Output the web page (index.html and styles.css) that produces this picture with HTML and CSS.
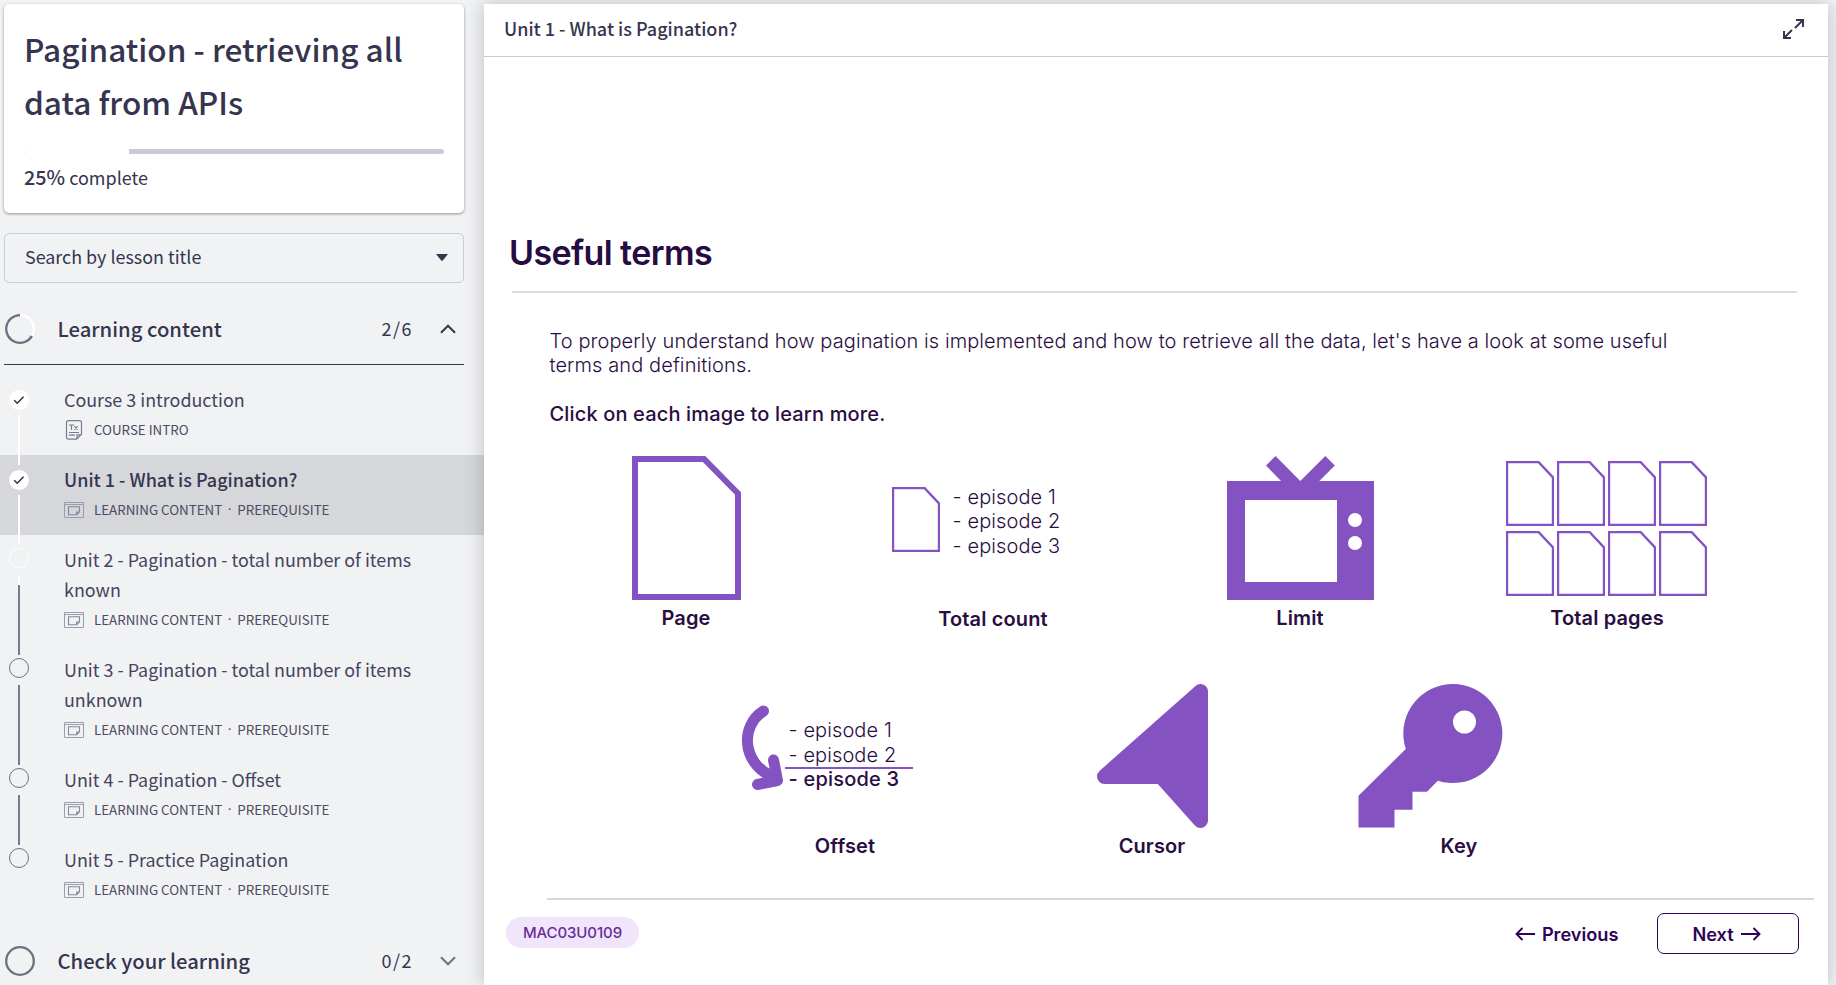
FILE: index.html
```html
<!DOCTYPE html>
<html lang="en">
<head>
<meta charset="utf-8">
<title>Pagination - retrieving all data from APIs</title>
<link rel="stylesheet" href="styles.css">
</head>
<body>
<svg class="defs" width="0" height="0">
  <symbol id="window" viewBox="0 0 20 16"><path d="M.5.5h19v15H.5zM.5 2.500h19" fill="none" stroke="#9c9cad"/><path d="M4.500 4.800h11v5l-2.800 2.900h-8.200zM15.500 10h-2.800v2.600" fill="none" stroke="#85859a" stroke-width="1.100"/></symbol>
  <symbol id="check" viewBox="0 0 20 20"><circle cx="10" cy="10" r="10" fill="#fff"/><path d="M5.2 10.3l3 3 6.4-6.6" fill="none" stroke="#33333d" stroke-width="1.5"/></symbol>
  <symbol id="ring" viewBox="0 0 20 20"><circle cx="10" cy="10" r="9.5" fill="none" stroke="currentColor"/></symbol>
  <symbol id="sheet" viewBox="0 0 48 65"><path d="M1 1h31.500l14.500 15.500v47.500h-46z" fill="none" stroke="#8453c1" stroke-width="2.400"/></symbol>
</svg>
<div class="app">
  <aside class="sidebar">
    <section class="card">
      <h1>Pagination - retrieving all<br>data from APIs</h1>
      <div class="bar"><div class="bar-done" style="width:25%"></div></div>
      <p class="percent"><b>25%</b> complete</p>
    </section>
    <div class="search"><span>Search by lesson title</span><svg width="12" height="7" viewBox="0 0 12 7"><path d="M0 0h12l-5 6.200q-1 1.200-2 0z" fill="#35354f"/></svg></div>
    <div class="section open">
      <svg class="big-ring" width="30" height="30" viewBox="0 0 30 30" fill="none" stroke-width="2.300"><path d="M15 1.200A13.800 13.800 0 1 0 26.950 21.900" stroke="#6f6f83"/><path d="M15 1.200A13.800 13.800 0 0 1 26.950 21.900" stroke="#fff"/></svg>
      <h2>Learning content</h2><span class="count">2/6</span>
      <svg width="16" height="10" viewBox="0 0 16 10"><path d="M1 8.700l7-7 7 7" fill="none" stroke="#35354f" stroke-width="2"/></svg>
    </div>
    <ul class="lessons">
      <li><div class="rail checked"><svg width="20" height="20"><use href="#check"/></svg><i class="pale"></i></div>
        <div class="lesson"><h3>Course 3 introduction</h3><p class="meta"><svg class="doc" width="20" height="20" viewBox="0 0 20 20" fill="none" stroke="#7b7b90" stroke-width="1.200"><path d="M4.500.7h11q2 0 2 2v11.500l-5 5h-8q-2 0-2-2V2.700q0-2 2-2zM17.500 14.800h-4.500v4.500M5 12.500h10M5 15.200h6M5 5h5M7.500 5v5M10.500 6l3 4M13.500 6l-3 4"/></svg><span>COURSE INTRO</span></p></div></li>
      <li class="active"><div class="rail checked"><svg width="20" height="20"><use href="#check"/></svg><i class="pale"></i></div>
        <div class="lesson"><h3>Unit 1 - What is Pagination?</h3><p class="meta"><svg width="20" height="16"><use href="#window"/></svg><span>LEARNING CONTENT</span><span class="dot">·</span><span>PREREQUISITE</span></p></div></li>
      <li><div class="rail current"><svg width="20" height="20"><use href="#ring"/></svg><i class="mixed"></i></div>
        <div class="lesson"><h3>Unit 2 - Pagination - total number of items<br>known</h3><p class="meta"><svg width="20" height="16"><use href="#window"/></svg><span>LEARNING CONTENT</span><span class="dot">·</span><span>PREREQUISITE</span></p></div></li>
      <li><div class="rail"><svg width="20" height="20"><use href="#ring"/></svg><i></i></div>
        <div class="lesson"><h3>Unit 3 - Pagination - total number of items<br>unknown</h3><p class="meta"><svg width="20" height="16"><use href="#window"/></svg><span>LEARNING CONTENT</span><span class="dot">·</span><span>PREREQUISITE</span></p></div></li>
      <li><div class="rail"><svg width="20" height="20"><use href="#ring"/></svg><i></i></div>
        <div class="lesson"><h3>Unit 4 - Pagination - Offset</h3><p class="meta"><svg width="20" height="16"><use href="#window"/></svg><span>LEARNING CONTENT</span><span class="dot">·</span><span>PREREQUISITE</span></p></div></li>
      <li><div class="rail"><svg width="20" height="20"><use href="#ring"/></svg></div>
        <div class="lesson"><h3>Unit 5 - Practice Pagination</h3><p class="meta"><svg width="20" height="16"><use href="#window"/></svg><span>LEARNING CONTENT</span><span class="dot">·</span><span>PREREQUISITE</span></p></div></li>
    </ul>
    <div class="section">
      <svg class="big-ring" width="30" height="30" viewBox="0 0 30 30"><circle cx="15" cy="15" r="13.800" fill="none" stroke="#6f6f83" stroke-width="2.300"/></svg>
      <h2>Check your learning</h2><span class="count">0/2</span>
      <svg width="16" height="10" viewBox="0 0 16 10"><path d="M1 1.300l7 7 7-7" fill="none" stroke="#6f6f83" stroke-width="2"/></svg>
    </div>
  </aside>
  <main class="panel">
    <header class="topbar"><span>Unit 1 - What is Pagination?</span>
      <svg width="21" height="20" viewBox="0 0 21 20" fill="none" stroke="#35354f" stroke-width="2"><path d="M13 1h7v7M20 1l-8 8M8 19H1v-7M1 19l8-8"/></svg>
    </header>
    <article class="slide">
      <h2 class="slide-title"><span>Useful terms</span></h2>
      <div class="slide-body">
        <p class="intro">To properly understand how pagination is implemented and how to retrieve all the data, let's have a look at some useful<br>terms and definitions.</p>
        <p class="hint">Click on each image to learn more.</p>
        <div class="terms">
          <figure><svg class="page" width="109" height="144" viewBox="0 0 109 144"><path d="M3 3h69l34 34.500v103.500h-103z" fill="none" stroke="#8453c1" stroke-width="6"/></svg><figcaption>Page</figcaption></figure>
          <figure><div class="art episodes"><svg width="48" height="65"><use href="#sheet"/></svg><div class="eps"><span>- episode 1</span><span>- episode 2</span><span>- episode 3</span></div></div><figcaption class="lower">Total count</figcaption></figure>
          <figure><svg width="147" height="144" viewBox="1227 456 147 144"><path fill-rule="evenodd" fill="#8453c1" d="M1227 481h54l-15-15.500 9.500-9.500 24.800 25 25-25 9.500 9.500-15.500 15.500h54.700v119h-147zM1245 500v82h92v-82zM1348 520a7 7 0 1 0 14 0a7 7 0 1 0-14 0M1348 543a7 7 0 1 0 14 0a7 7 0 1 0-14 0"/></svg><figcaption>Limit</figcaption></figure>
          <figure><div class="art sheets"><svg><use href="#sheet"/></svg><svg><use href="#sheet"/></svg><svg><use href="#sheet"/></svg><svg><use href="#sheet"/></svg><svg><use href="#sheet"/></svg><svg><use href="#sheet"/></svg><svg><use href="#sheet"/></svg><svg><use href="#sheet"/></svg></div><figcaption>Total pages</figcaption></figure>
        </div>
        <div class="terms second">
          <figure><div class="art offset"><svg width="43" height="89" viewBox="741 704 43 89" fill="none" stroke="#8453c1" stroke-width="11" stroke-linecap="round" stroke-linejoin="round"><path d="M763.500 711C740 726 742 762 771 776M773.500 760l4 20.500-20 4"/><path d="M771 770l6 10-10-2z" fill="#8453c1" stroke-width="4"/></svg><div class="eps"><span>- episode 1</span><span class="ruled">- episode 2</span><span class="strong">- episode 3</span></div></div><figcaption>Offset</figcaption></figure>
          <figure><svg class="cursor" width="111" height="144" viewBox="1098 683 111 144"><path d="M1105.500 775.500L1201.500 690.500V819.500L1162.200 775.500z" fill="#8453c1" stroke="#8453c1" stroke-width="15" stroke-linejoin="round"/></svg><figcaption>Cursor</figcaption></figure>
          <figure class="key"><svg width="145" height="144" viewBox="1358 683.500 145 144"><path fill-rule="evenodd" fill="#8453c1" d="M1405.800 748.500A49.500 49.500 0 1 1 1437.800 780.200L1427 791.200H1412.500V809.200H1394.500V827H1358.500V795.200zM1453 721.500a11.500 11.500 0 1 0 23 0a11.500 11.500 0 1 0-23 0"/></svg><figcaption>Key</figcaption></figure>
        </div>
      </div>
      <footer class="slide-foot">
        <span class="pill">MAC03U0109</span>
        <div class="nav">
          <span class="prev"><svg width="20" height="14" viewBox="0 0 20 14"><path d="M20 7H1.500M7.500 1l-6 6 6 6" fill="none" stroke="#2e0359" stroke-width="1.900"/></svg><b>Previous</b></span>
          <span class="next"><b>Next</b><svg width="20" height="14" viewBox="0 0 20 14"><path d="M0 7h18.500M12.500 1l6 6-6 6" fill="none" stroke="#2e0359" stroke-width="1.900"/></svg></span>
        </div>
      </footer>
    </article>
  </main>
</div>
</body>
</html>
```
FILE: styles.css
```css
* { box-sizing: border-box; }
body { margin: 0; background: #f1f2f4; color: #35354f; font-family: "Noto Sans CJK SC", sans-serif; overflow: hidden; }
h1, h2, h3, p, ul, figure { margin: 0; padding: 0; }
svg { display: block; flex: none; }
.defs { position: absolute; }
.app { display: flex; height: 985px; padding-top: 4px; overflow: hidden; }
.sidebar { width: 484px; flex: none; }
.card { margin-left: 4px; width: 460px; height: 209px; padding: 18px 21px 0 20px; background: #fff; border-radius: 5px; box-shadow: 0 1px 3px rgba(0,0,0,.4); }
h1 { font-size: 31.550px; line-height: 53px; font-weight: 500; white-space: nowrap; }
.bar { width: 420px; height: 5px; margin: 21px 0 0; border-radius: 3px; background: #cacbd7; overflow: hidden; }
.bar-done { height: 5px; background: #fff; }
.percent { font-size: 18px; line-height: 30px; margin-top: 8px; }
.percent b { font-weight: 500; font-size: 19.800px; }
.search { display: flex; align-items: center; justify-content: space-between; margin: 20px 0 0 4px; width: 460px; height: 50px; padding: 0 15px 2px 20px; border: 1px solid #cacbd7; border-radius: 5px; font-size: 17.900px; }
.search span { padding-bottom: 2px; }
.section { display: flex; align-items: center; height: 70px; width: 460px; margin: 11px 0 0 4px; padding: 0 8px 0 1px; }
.section h2 { margin-left: 22.500px; font-size: 20.250px; line-height: 30px; font-weight: 500; flex: 1; }
.count { font-size: 18px; letter-spacing: 1.500px; margin-right: 27px; padding-bottom: 2px; }
.section.open { height: 71px; border-bottom: 1px solid #35354f; }
.lessons { list-style: none; padding-top: 10px; }
.lessons li { display: flex; padding: 10px 0 10px 9px; }
.lessons .active { background: #d6d7db; }
.rail { display: flex; flex-direction: column; align-items: center; width: 20px; padding-top: 3px; color: #6f6f83; }
.rail.checked { padding-top: 5px; }
.rail.current { color: #fff; }
.rail i { width: 2px; flex: 1; margin: 7px 0 -20px; background: #77798e; }
.rail.checked i { margin: 5px 0 -20px; }
.rail .pale { background: #fff; z-index: 1; }
.rail .mixed { background: linear-gradient(#fff 10px, #77798e 10px); }
.lesson { margin: -1px 0 1px 35px; }
.lesson h3 { font-size: 17.900px; line-height: 30px; font-weight: 400; white-space: nowrap; color: #44445d; }
.lesson .meta { color: #4b4b62; }
.active .lesson h3 { font-weight: 500; font-size: 18px; color: #35354f; }
.meta { display: flex; align-items: center; height: 30px; font-size: 13.350px; }
.meta svg { margin-top: 1px; }
.meta svg + span { margin-left: 10px; }
.dot { width: 15px; text-align: center; font-family: Inter, sans-serif; }
.panel { width: 1344px; flex: none; background: #fff; box-shadow: 0 0 18px rgba(0,0,0,.22); z-index: 2; }
.topbar { display: flex; align-items: center; justify-content: space-between; height: 53px; padding: 0 24px 3px 20px; border-bottom: 1px solid #cacbd7; font-size: 18px; font-weight: 500; }
.topbar span { padding-bottom: 2px; }
.slide { font-family: Inter, sans-serif; color: #2a0e42; padding-top: 175px; }
.slide-title { margin: 0 31px 0 28px; height: 61px; font-size: 34px; line-height: 41px; font-weight: 600; color: #270b43; border-bottom: 2px solid #dfdadd; letter-spacing: -.6px; }
.slide-title span { margin-left: -3px; }
.slide-body { padding: 36px 0 0 65.500px; height: 605px; }
.intro { font-size: 20px; line-height: 24px; font-weight: 300; white-space: nowrap; letter-spacing: .095px; }
.hint { font-size: 20px; line-height: 24px; margin-top: 25px; font-weight: 500; letter-spacing: .15px; }
.terms { display: grid; grid-template-columns: repeat(4, 307px); margin: 30px 0 0 -17px; height: 228px; }
.terms.second { margin: 0 0 0 142px; grid-template-columns: repeat(3, 307px); }
figure { display: flex; flex-direction: column; align-items: center; }
figcaption { font-size: 20px; line-height: 24px; margin-top: 6px; font-weight: 600; letter-spacing: .12px; }
figcaption.lower { margin-top: 7px; }
.art { height: 144px; }
.cursor { margin-left: 1px; }
.key svg { margin-right: 58px; }
.episodes { display: flex; padding-top: 31px; margin-right: 34px; }
.episodes .eps { margin: -2.500px 0 0 13px; }
.eps { display: flex; flex-direction: column; font-size: 20px; line-height: 24.500px; font-weight: 300; white-space: nowrap; letter-spacing: .1px; }
.offset { display: flex; padding-top: 20px; margin-right: 37px; }
.offset .eps { margin: 14px 0 0 1px; width: 128px; }
.offset span { padding-left: 4px; height: 24.500px; }
.offset .ruled { height: 26px; margin-bottom: -1.500px; border-bottom: 2.500px solid #8453c1; }
.offset .strong { font-weight: 500; letter-spacing: .2px; }
.sheets { display: grid; grid-template-columns: repeat(4, 48px); grid-auto-rows: 65px; gap: 5px 2.700px; padding-top: 5px; margin-right: 1px; }
.sheets svg { width: 48px; height: 65px; }
.slide-foot { margin: 0 14px 0 63px; border-top: 2px solid #dcd6d9; height: 70px; display: flex; justify-content: space-between; }
.pill { margin: 17px 0 0 -41px; width: 133px; height: 31px; line-height: 32px; border-radius: 16px; background: #f0e5fb; color: #6a2c98; font-size: 15px; font-weight: 500; text-align: center; letter-spacing: -.1px; }
.nav { display: flex; padding: 13px 15px 0 0; color: #2e0359; font-size: 18.200px; }
.nav b { font-weight: 600; }
.prev { display: flex; align-items: center; height: 41px; gap: 7px; margin-right: 38.500px; }
.next { display: flex; align-items: center; justify-content: center; gap: 7px; padding-right: 3px; width: 142px; height: 41px; border: 1.500px solid #2e0359; border-radius: 7px; }
```
